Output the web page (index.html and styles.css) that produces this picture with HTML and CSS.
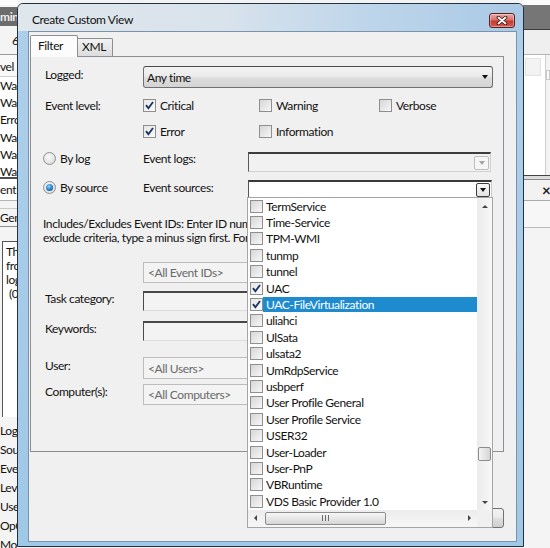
FILE: index.html
```html
<!DOCTYPE html>
<html>
<head>
<meta charset="utf-8">
<title>Create Custom View</title>
<link rel="stylesheet" href="styles.css">
</head>
<body>
<div class="bg-left">
  <div class="bl-title">mini</div>
  <div class="bl-count">6</div>
  <div class="bl-head">vel</div>
  <div class="bl-rows">
    <div>Wa</div><div>Wa</div><div>Erro</div><div>Wa</div><div>Wa</div><div>Wa</div>
  </div>
  <div class="bl-event">ent 4</div>
  <div class="bl-tab">Gene</div>
  <div class="bl-box">
    <div>Th</div><div>fro</div><div>log</div><div class="ind">(0:</div>
  </div>
  <div class="bl-props">
    <div>Log</div><div>Sou</div><div>Eve</div><div>Leve</div><div>Use</div><div>OpC</div><div>Mo</div>
  </div>
</div>

<div class="bg-right">
  <div class="br-band"></div>
  <div class="br-tool"></div>
  <div class="br-list">
    <div class="br-cell"><span class="br-box"></span></div>
    <div class="br-sb"><span class="br-arrow"></span></div>
  </div>
  <div class="br-sep"></div>
  <div class="br-x">×</div>
  <div class="br-bar"></div>
</div>

<div class="dialog">
  <div class="titlebar">
    <span class="title">Create Custom View</span>
    <span class="close">
      <svg width="12" height="9" viewBox="0 0 12 9"><path d="M2.5 1.5L9.5 7.5M9.5 1.5L2.5 7.5" stroke="#3a1212" stroke-width="3.6" stroke-linecap="round"/><path d="M2.5 1.5L9.5 7.5M9.5 1.5L2.5 7.5" stroke="#fff" stroke-width="1.9" stroke-linecap="round"/></svg>
    </span>
  </div>
  <div class="client">
    <div class="tabs">
      <div class="tab active">Filter</div>
      <div class="tab">XML</div>
    </div>
    <div class="panel">
      <div class="row r-logged">
        <span class="lbl up">Logged:</span>
        <div class="combo-any"><span>Any time</span><i class="arr"></i></div>
      </div>
      <div class="row r-lvl1">
        <span class="lbl">Event level:</span>
        <span class="chk c1"><span class="box on"><svg width="11" height="11" viewBox="0 0 11 11"><path d="M2 5.2L4.4 8.2L9 2" fill="none" stroke="#1d3566" stroke-width="1.9"/></svg></span>Critical</span>
        <span class="chk c2"><span class="box"></span>Warning</span>
        <span class="chk"><span class="box"></span>Verbose</span>
      </div>
      <div class="row r-lvl2">
        <span class="lbl"></span>
        <span class="chk c1"><span class="box on"><svg width="11" height="11" viewBox="0 0 11 11"><path d="M2 5.2L4.4 8.2L9 2" fill="none" stroke="#1d3566" stroke-width="1.9"/></svg></span>Error</span>
        <span class="chk c2"><span class="box"></span>Information</span>
      </div>
      <div class="row r-bylog">
        <span class="rad up4"><span class="radio"></span>By log</span>
        <span class="lbl2 up4">Event logs:</span>
        <div class="combo-dis"><i class="dbtn"><i class="arr gray"></i></i></div>
      </div>
      <div class="row r-bysrc">
        <span class="rad up2"><span class="radio on"></span>By source</span>
        <span class="lbl2 up2">Event sources:</span>
        <div class="combo-src">
          <i class="sbtn"><i class="arr"></i></i>
          <div class="dlist">
            <div class="items">
              <div class="item"><span class="box"></span><span class="txt">TermService</span></div>
              <div class="item"><span class="box"></span><span class="txt">Time-Service</span></div>
              <div class="item"><span class="box"></span><span class="txt">TPM-WMI</span></div>
              <div class="item"><span class="box"></span><span class="txt">tunmp</span></div>
              <div class="item"><span class="box"></span><span class="txt">tunnel</span></div>
              <div class="item"><span class="box on"><svg width="11" height="11" viewBox="0 0 11 11"><path d="M2 5.2L4.4 8.2L9 2" fill="none" stroke="#1d3566" stroke-width="1.9"/></svg></span><span class="txt">UAC</span></div>
              <div class="item sel"><span class="box on"><svg width="11" height="11" viewBox="0 0 11 11"><path d="M2 5.2L4.4 8.2L9 2" fill="none" stroke="#1d3566" stroke-width="1.9"/></svg></span><span class="txt">UAC-FileVirtualization</span></div>
              <div class="item"><span class="box"></span><span class="txt">uliahci</span></div>
              <div class="item"><span class="box"></span><span class="txt">UlSata</span></div>
              <div class="item"><span class="box"></span><span class="txt">ulsata2</span></div>
              <div class="item"><span class="box"></span><span class="txt">UmRdpService</span></div>
              <div class="item"><span class="box"></span><span class="txt">usbperf</span></div>
              <div class="item"><span class="box"></span><span class="txt">User Profile General</span></div>
              <div class="item"><span class="box"></span><span class="txt">User Profile Service</span></div>
              <div class="item"><span class="box"></span><span class="txt">USER32</span></div>
              <div class="item"><span class="box"></span><span class="txt">User-Loader</span></div>
              <div class="item"><span class="box"></span><span class="txt">User-PnP</span></div>
              <div class="item"><span class="box"></span><span class="txt">VBRuntime</span></div>
              <div class="item"><span class="box"></span><span class="txt">VDS Basic Provider 1.0</span></div>
            </div>
            <div class="vs">
              <span class="sa"><i class="tri-up"></i></span>
              <span class="vthumb"></span>
              <span class="sa down"><i class="tri-down"></i></span>
            </div>
            <div class="hs">
              <span class="ha"><i class="tri-left"></i></span>
              <span class="hthumb"><svg width="7" height="6" viewBox="0 0 7 6"><path d="M0.5 0V6M3.5 0V6M6.5 0V6" stroke="#6b6b6b" stroke-width="1"/></svg></span>
              <span class="htrack"></span>
              <span class="ha"><i class="tri-right"></i></span>
            </div>
            <div class="corner"></div>
          </div>
        </div>
      </div>
      <div class="help">Includes/Excludes Event IDs: Enter ID numbers and/or ID ranges separated by commas. To<br>exclude criteria, type a minus sign first. For example 1,3,5-99,-76</div>
      <div class="row r-ids">
        <span class="lbl"></span>
        <div class="tbox">&lt;All Event IDs&gt;</div>
      </div>
      <div class="row r-task">
        <span class="lbl up">Task category:</span>
        <div class="ebox"></div>
      </div>
      <div class="row r-kw">
        <span class="lbl up">Keywords:</span>
        <div class="ebox"></div>
      </div>
      <div class="row r-user">
        <span class="lbl up">User:</span>
        <div class="tbox">&lt;All Users&gt;</div>
      </div>
      <div class="row r-comp">
        <span class="lbl up">Computer(s):</span>
        <div class="tbox">&lt;All Computers&gt;</div>
      </div>
    </div>
    <div class="buttons">
      <span class="btn">OK</span>
      <span class="btn">Cancel</span>
    </div>
  </div>
</div>
</body>
</html>
```
FILE: styles.css
```css
* { box-sizing: border-box; }
html, body { margin: 0; padding: 0; }
body {
  width: 550px; height: 548px; overflow: hidden; position: relative;
  background: #f3f3f3;
  font-family: Lato, "Liberation Sans", sans-serif;
  font-size: 12px; letter-spacing: -0.4px; color: #121212;
}

/* ---------- background window, left ---------- */
.bg-left {
  position: absolute; left: 0; top: 0; width: 17px; height: 548px;
  overflow: hidden; white-space: nowrap;
  background: #f4f4f4; border-top: 5px solid #fbfbfb;
}
.bl-title { margin-top: 2px; height: 19px; line-height: 19px; background: #6c6c6c; color: #ececec; font-weight: 700; }
.bl-count { height: 29px; line-height: 29px; padding-left: 12px; border-bottom: 1px solid #9a9a9a; }
.bl-head { height: 22px; line-height: 24px; border-bottom: 1px solid #cfcfcf; background: #f8f8f8; }
.bl-rows { height: 100px; overflow: hidden; background: #fff; }
.bl-rows div { height: 17.2px; line-height: 17.2px; }
.bl-event { height: 24px; line-height: 21px; border-top: 2px solid #4e4e4e; border-bottom: 1px solid #b4b4b4; background: #fff; }
.bl-tab { margin-top: 7px; height: 19px; line-height: 17px; border-top: 1px solid #c9c9c9; border-bottom: 1px solid #8f8f8f; }
.bl-box { margin: 14px 0 0 2px; height: 176px; border-left: 1px solid #555; border-top: 1px solid #555; padding: 3px 0 0 3px; line-height: 14px; background: #fff; }
.bl-box .ind { padding-left: 3px; }
.bl-props { margin-top: 4px; }
.bl-props div { height: 19px; line-height: 19px; }

/* ---------- background window, right ---------- */
.bg-right {
  position: absolute; left: 523px; top: 0; width: 27px; height: 548px;
  overflow: hidden; background: #f4f4f4; border-top: 5px solid #fbfbfb;
}
.br-band { height: 25px; background: #767676; border-bottom: 1px solid #3c3c3c; }
.br-tool { height: 25px; background: #efefef; border-bottom: 1px solid #b5b5b5; }
.br-list { height: 120px; background: #fff; display: flex; }
.br-cell { width: 22px; padding: 3px 0 0 2px; }
.br-box { display: block; width: 16px; height: 18px; background: #f3f3f3; border: 1px solid #e2e2e2; }
.br-sb { flex: 1; border-left: 1px solid #cfcfcf; background: #f3f3f3; padding-top: 15px; }
.br-arrow { display: block; height: 10px; border: 1px solid #c9c9c9; background: #fafafa; }
.br-sep { height: 5px; border-top: 1px solid #444; border-bottom: 1px solid #888; background: #ddd; }
.br-x { height: 20px; line-height: 20px; padding-left: 19px; font-size: 15px; font-weight: 700; color: #222; background: #f2f2f2; }
.br-bar { height: 28px; border-top: 1px solid #aaa; border-bottom: 1px solid #bbb; background: #f7f7f7; }

/* ---------- dialog ---------- */
.dialog {
  position: absolute; left: 17px; top: 3px; width: 507px; height: 544px;
  border: 1px solid #24323f; border-radius: 6px 6px 0 0;
  background: linear-gradient(180deg, #aecfea, #9fc8e7);
  padding: 0 6px 4px 10px;
  display: flex; flex-direction: column;
}
.titlebar {
  height: 27px; margin: 0 -6px 0 -10px; padding: 0 8px 0 14px;
  display: flex; align-items: flex-start;
  border-radius: 5px 5px 0 0;
  background: linear-gradient(90deg, #dfe6ec 0%, #d9e3ec 40%, #bdd5ea 70%, #a9c9e6 100%);
}
.title { margin-top: 8px; line-height: 16px; color: #111; }
.close {
  margin-left: auto; margin-top: 9px; width: 26px; height: 15px;
  display: flex; align-items: center; justify-content: center;
  border: 1px solid #5a2020; border-radius: 3px;
  background: linear-gradient(180deg, #eaa9a5 0%, #d9716a 45%, #c43a30 55%, #d45c52 100%);
  box-shadow: inset 0 0 0 1px rgba(255,255,255,.35);
}
.client {
  flex: 1; background: #f0f0f0; border: 1px solid #7a93ab;
  padding: 3px 0 0 1px; display: flex; flex-direction: column;
}
.tabs { height: 21px; display: flex; align-items: flex-end; }
.tab {
  height: 18px; padding: 0 6px 0 4px; line-height: 16px;
  border: 1px solid #8c8e94; border-bottom: 0; border-left: 0;
  background: linear-gradient(180deg, #f2f2f2, #dcdcdc);
  border-radius: 0 2px 0 0;
}
.tab.active {
  position: relative; z-index: 2;
  height: 22px; margin-bottom: -1px; width: 48px; padding-left: 7px; line-height: 20px;
  border-left: 1px solid #8c8e94; background: #fcfcfc; border-radius: 2px 2px 0 0;
}
.panel {
  width: 474px; height: 396px; border: 1px solid #8c8e94;
  padding-left: 12px; display: flex; flex-direction: column;
}
.row { display: flex; align-items: center; }
.r-logged { margin-top: 9px; height: 22px; }
.r-lvl1 { margin-top: 9px; height: 16px; }
.r-lvl2 { margin-top: 10px; height: 16px; }
.r-bylog { margin-top: 13px; height: 20px; }
.r-bysrc { margin-top: 8px; height: 17px; position: relative; z-index: 5; }
.r-ids { margin-top: 17px; height: 21px; }
.r-task { margin-top: 8px; height: 20px; }
.r-kw { margin-top: 10px; height: 20px; }
.r-user { margin-top: 16px; height: 22px; }
.r-comp { margin-top: 5px; height: 21px; }

.lbl { width: 100px; flex: none; padding-left: 2px; }
.lbl2 { width: 105px; flex: none; }
.up { margin-bottom: 6px; }
.up4 { margin-bottom: 8px; }
.up2 { margin-bottom: 3px; }

.chk { display: flex; align-items: center; gap: 4px; }
.chk.c1 { width: 116px; }
.chk.c2 { width: 120px; }
.box {
  width: 13px; height: 13px; flex: none; border: 1px solid #8e8f8f;
  background: linear-gradient(135deg, #d6d6d6, #f7f7f7);
  display: flex; align-items: center; justify-content: center;
}
.box.on { background: linear-gradient(135deg, #e6e6e6, #fbfbfb); }
.rad { width: 100px; flex: none; display: flex; align-items: center; gap: 4px; }
.radio {
  width: 13px; height: 13px; border-radius: 50%; border: 1px solid #8e8f8f;
  background: radial-gradient(circle at 40% 35%, #fafafa, #d6d6d6);
  display: flex; align-items: center; justify-content: center;
}
.radio.on::after {
  content: ""; width: 7px; height: 7px; border-radius: 50%;
  background: radial-gradient(circle at 40% 35%, #8fd0fb, #1a74c0 60%, #0c3f78);
}

.arr { display: block; width: 0; height: 0; border-left: 3.5px solid transparent; border-right: 3.5px solid transparent; border-top: 4px solid #111; }
.arr.gray { border-top-color: #a4a4a4; }
.combo-any {
  width: 350px; height: 22px; padding: 0 4px 0 3px;
  display: flex; align-items: center; justify-content: space-between;
  border: 1px solid #707070; border-top-color: #4a4a4a; border-radius: 3px;
  background: linear-gradient(180deg, #f3f3f3, #ebebeb 45%, #dddddd 55%, #d3d3d3);
}
.combo-dis {
  width: 243px; height: 20px; display: flex; align-items: center; justify-content: flex-end;
  background: #f1f1f1; border: 1px solid #d0d0d0; border-top: 2px solid #3d3d3d; border-left-color: #5a5a5a;
  padding-right: 1px;
}
.dbtn {
  width: 15px; height: 14px; display: flex; align-items: center; justify-content: center;
  border: 1px solid #bdbdbd; border-radius: 2px; background: #f6f6f6;
}
.combo-src {
  position: relative; width: 244px; height: 17px;
  display: flex; align-items: center; justify-content: flex-end; padding-right: 1px;
  background: #fff; border-top: 2px solid #3a3a3a; border-left: 1px solid #555; border-right: 1px solid #c9c9c9;
}
.sbtn {
  width: 14px; height: 14px; display: flex; align-items: center; justify-content: center;
  border: 1px solid #3c3c3c; border-radius: 2px; background: linear-gradient(180deg, #fafafa, #e0e0e0);
}

/* dropdown list */
.dlist {
  position: absolute; left: -2px; top: 100%; width: 246px;
  border: 1px solid #a5a5a5; background: #fff;
  display: grid; grid-template-columns: 229px 15px; grid-template-rows: 311.6px 17px;
}
.item { height: 16.4px; display: flex; align-items: center; padding-left: 2px; white-space: nowrap; }
.item .txt { flex: 1; height: 15px; line-height: 15px; padding-left: 3px; }
.item.sel .txt { background: #1f8bcf; color: #fff; }
.vs { background: linear-gradient(90deg, #ebebeb, #f8f8f8); display: flex; flex-direction: column; align-items: center; }
.sa { height: 16px; width: 100%; display: flex; align-items: center; justify-content: center; }
.sa.down { margin-top: auto; height: 14px; }
.vthumb {
  margin-top: 233px; width: 13px; height: 14px;
  border: 1px solid #8c8c8c; border-radius: 2px;
  background: linear-gradient(90deg, #f5f5f5, #d5d5d5);
}
.tri-up { display: block; width: 0; height: 0; border-left: 3px solid transparent; border-right: 3px solid transparent; border-bottom: 3px solid #444; }
.tri-down { display: block; width: 0; height: 0; border-left: 3px solid transparent; border-right: 3px solid transparent; border-top: 3px solid #444; }
.tri-left { display: block; width: 0; height: 0; border-top: 3px solid transparent; border-bottom: 3px solid transparent; border-right: 3px solid #444; }
.tri-right { display: block; width: 0; height: 0; border-top: 3px solid transparent; border-bottom: 3px solid transparent; border-left: 3px solid #444; }
.hs { display: flex; align-items: center; background: linear-gradient(180deg, #ececec, #f7f7f7); }
.ha { width: 15px; height: 17px; flex: none; display: flex; align-items: center; justify-content: center; }
.hthumb {
  margin-left: 2px; width: 121px; height: 13px; flex: none;
  display: flex; align-items: center; justify-content: center;
  border: 1px solid #8d8d8d; border-radius: 2px;
  background: linear-gradient(180deg, #f7f7f7, #d6d6d6);
}
.htrack { flex: 1; }
.corner { background: #f0f0f0; }

.help { margin-top: 20px; width: 440px; line-height: 14px; white-space: nowrap; overflow: hidden; }
.tbox {
  width: 347px; height: 100%; padding-left: 4px; display: flex; align-items: center;
  color: #6a6a6a; background: #f3f3f3; border: 1px solid #bdbdbd;
}
.ebox {
  width: 347px; height: 100%; background: #f3f3f3;
  border: 1px solid #dcdcdc; border-top: 2px solid #474747; border-left-color: #4a4a4a;
}
.buttons { display: flex; justify-content: flex-end; gap: 7px; margin-top: 56px; padding-right: 12px; }
.btn {
  width: 75px; height: 20px; display: flex; align-items: center; justify-content: center;
  border: 1px solid #707070; border-radius: 3px;
  background: linear-gradient(180deg, #f2f2f2, #ebebeb 45%, #dddddd 55%, #cfcfcf);
}
```
